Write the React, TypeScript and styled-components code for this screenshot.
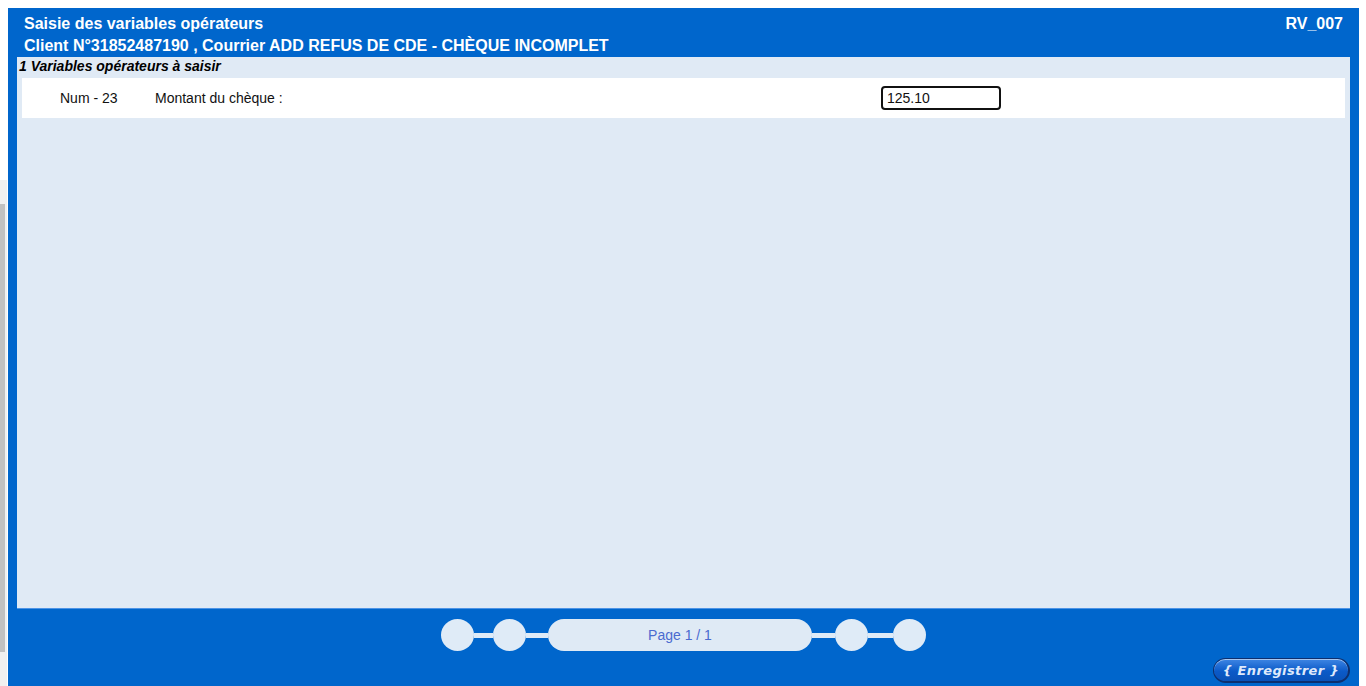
import styled, { createGlobalStyle } from "styled-components";

const GlobalStyle = createGlobalStyle`
  html, body {
    margin: 0;
    padding: 0;
    background: #ffffff;
    font-family: "Liberation Sans", Arial, sans-serif;
  }
`;

const Page = styled.div`
  display: flex;
  height: 686px;
  overflow: hidden;
`;

const Gutter = styled.div`
  width: 8px;
  display: flex;
  flex-direction: column;
  padding-top: 180px;
`;

const Track = styled.div`
  flex: 1;
  width: 7px;
  background: #f0f0f0;
  padding: 24px 0 34px;
  box-sizing: border-box;
`;

const Thumb = styled.div`
  width: 5px;
  height: 100%;
  background: #c1c1c1;
`;

const Frame = styled.div`
  margin-top: 8px;
  width: 1351px;
  background: #0066cc;
  display: flex;
  flex-direction: column;
`;

const Header = styled.div`
  display: flex;
  justify-content: space-between;
  padding: 5px 16px 0 16px;
  height: 49px;
  box-sizing: border-box;
  color: #ffffff;
  font-weight: bold;
  font-size: 16px;
  line-height: 22px;
`;

const HeaderLines = styled.div`
  display: flex;
  flex-direction: column;
`;

const Content = styled.div`
  margin: 0 9px;
  height: 552px;
  background: #e0eaf5;
  border-bottom: 1px solid #4d94e6;
  box-sizing: border-box;
`;

const SectionTitle = styled.div`
  padding-left: 2px;
  height: 21px;
  line-height: 19px;
  font-size: 14px;
  font-weight: bold;
  font-style: italic;
  color: #000000;
`;

const VarRow = styled.div`
  margin: 0 5px;
  height: 40px;
  background: #ffffff;
  display: grid;
  grid-template-columns: 95px 726px 120px;
  align-items: center;
  padding-left: 38px;
  font-size: 14px;
  color: #111111;
`;

const ValueInput = styled.input`
  width: 120px;
  height: 24px;
  box-sizing: border-box;
  border: 2px solid #111111;
  border-radius: 4px;
  padding: 0 4px;
  font-family: "Liberation Sans", Arial, sans-serif;
  font-size: 14px;
  color: #111111;
  background: #ffffff;
  outline: none;
`;

const Footer = styled.div`
  flex: 1;
  display: flex;
  flex-direction: column;
  padding: 10px 9px 0;
`;

const Pager = styled.div`
  align-self: center;
  display: flex;
  align-items: center;
  height: 32px;
`;

const Dot = styled.div`
  width: 33px;
  height: 32px;
  border-radius: 50%;
  background: #dfebf7;
`;

const Link = styled.div<{ $w: number }>`
  width: ${(p) => p.$w}px;
  height: 5px;
  background: #dfebf7;
`;

const PagePill = styled.div`
  width: 264px;
  height: 32px;
  border-radius: 16px;
  background: #dfeaf5;
  display: flex;
  align-items: center;
  justify-content: center;
  font-size: 14px;
  color: #4a6bd0;
`;

const SaveButton = styled.button`
  align-self: flex-end;
  margin-top: 7px;
  width: 137px;
  height: 25px;
  border-radius: 13px;
  border: 1px solid #0d2f6e;
  border-bottom-width: 2px;
  border-right-width: 2px;
  background: linear-gradient(#3f86e4, #0b5ac8 55%, #0a52b8);
  box-shadow: inset 0 1px 0 rgba(255, 255, 255, 0.55);
  color: #dfe9fb;
  font-family: "DejaVu Sans", Verdana, sans-serif;
  font-size: 13px;
  font-weight: bold;
  font-style: italic;
  letter-spacing: 0.4px;
  padding: 0;
  cursor: pointer;
`;

export default function App() {
  return (
    <>
      <GlobalStyle />
      <Page>
        <Gutter>
          <Track>
            <Thumb />
          </Track>
        </Gutter>
        <Frame>
          <Header>
            <HeaderLines>
              <span>Saisie des variables opérateurs</span>
              <span>Client N°31852487190 , Courrier ADD REFUS DE CDE - CHÈQUE INCOMPLET</span>
            </HeaderLines>
            <span>RV_007</span>
          </Header>
          <Content>
            <SectionTitle>1 Variables opérateurs à saisir</SectionTitle>
            <VarRow>
              <span>Num - 23</span>
              <span>Montant du chèque :</span>
              <ValueInput defaultValue="125.10" />
            </VarRow>
          </Content>
          <Footer>
            <Pager>
              <Dot />
              <Link $w={19} />
              <Dot />
              <Link $w={22} />
              <PagePill>Page 1 / 1</PagePill>
              <Link $w={23} />
              <Dot />
              <Link $w={25} />
              <Dot />
            </Pager>
            <SaveButton>{"{ Enregistrer }"}</SaveButton>
          </Footer>
        </Frame>
      </Page>
    </>
  );
}
